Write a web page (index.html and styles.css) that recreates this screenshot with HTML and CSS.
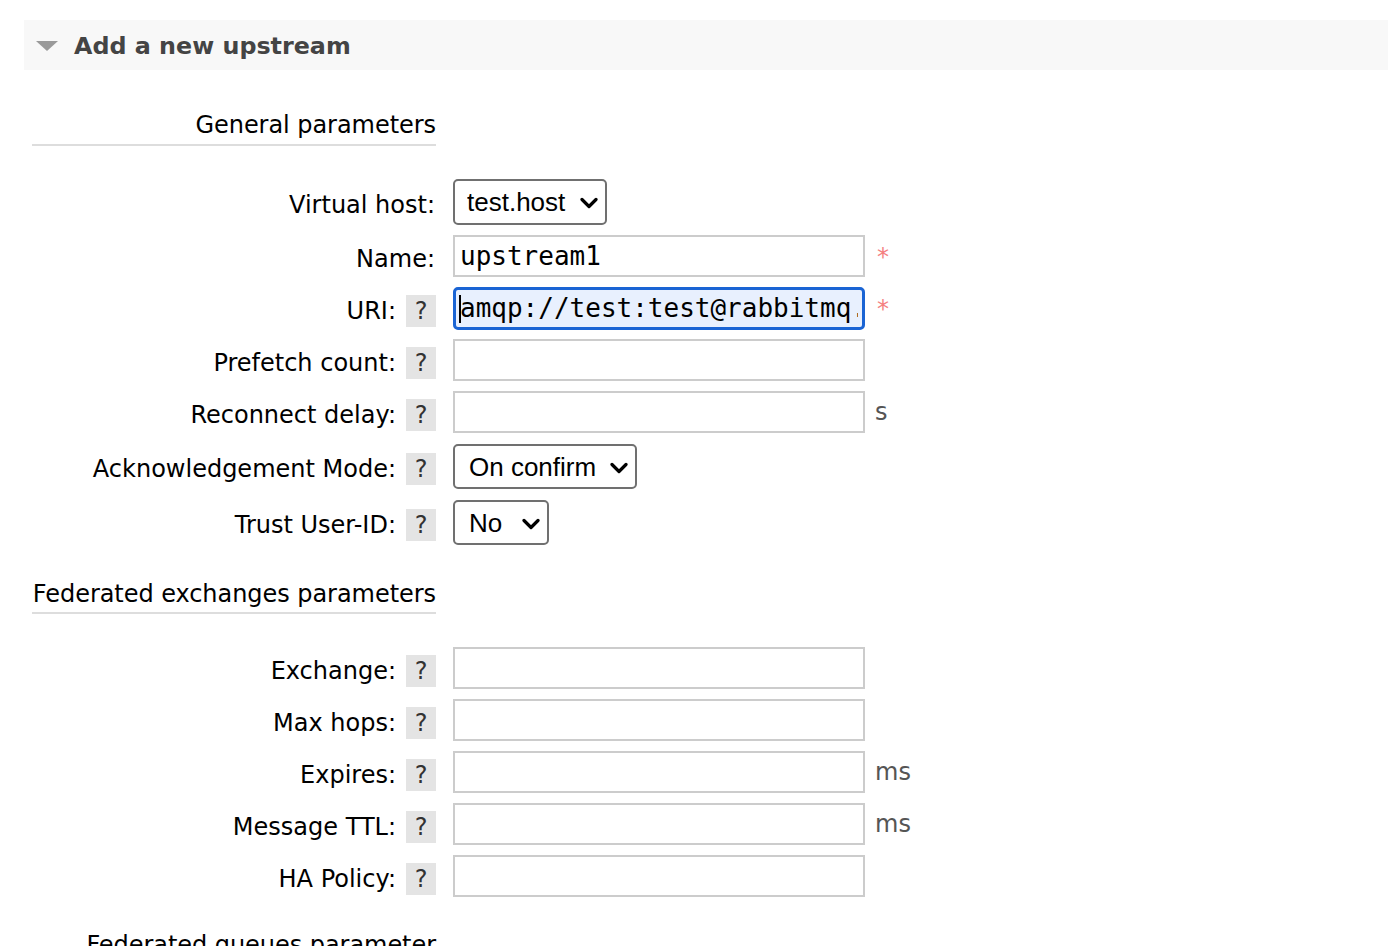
FILE: index.html
```html
<!DOCTYPE html>
<html lang="en">
<head>
<meta charset="utf-8">
<title>Add a new upstream</title>
<link rel="stylesheet" href="styles.css">
</head>
<body>
<div class="section">
  <div class="section-head">
    <span class="arrow"></span>
    <h2 class="section-title">Add a new upstream</h2>
  </div>
  <form class="form">
    <h3 class="group-title">General parameters</h3>
    <div class="rows">
      <div class="row row-select">
        <label class="label">Virtual host:</label>
        <span class="select select-vhost">
          <select><option>test.host</option></select>
          <svg class="chev" viewBox="0 0 18 12" width="18" height="12"><path d="M2 2.5 L9 9.5 L16 2.5" fill="none" stroke="#000" stroke-width="3.2" stroke-linecap="round" stroke-linejoin="round"/></svg>
        </span>
      </div>
      <div class="row">
        <label class="label">Name:</label>
        <input class="field" type="text" value="upstream1">
        <span class="req">*</span>
      </div>
      <div class="row">
        <label class="label">URI:<span class="help">?</span></label>
        <span class="focus-wrap">
          <input class="field field-focus" type="text" value="amqp://test:test@rabbitmq.example.com">
          <span class="caret"></span>
        </span>
        <span class="req">*</span>
      </div>
      <div class="row">
        <label class="label">Prefetch count:<span class="help">?</span></label>
        <input class="field" type="text">
      </div>
      <div class="row">
        <label class="label">Reconnect delay:<span class="help">?</span></label>
        <input class="field" type="text">
        <span class="unit">s</span>
      </div>
      <div class="row row-select2">
        <label class="label">Acknowledgement Mode:<span class="help">?</span></label>
        <span class="select select-ack">
          <select><option>On confirm</option></select>
          <svg class="chev" viewBox="0 0 18 12" width="18" height="12"><path d="M2 2.5 L9 9.5 L16 2.5" fill="none" stroke="#000" stroke-width="3.2" stroke-linecap="round" stroke-linejoin="round"/></svg>
        </span>
      </div>
      <div class="row row-select2">
        <label class="label">Trust User-ID:<span class="help">?</span></label>
        <span class="select select-trust">
          <select><option>No</option></select>
          <svg class="chev" viewBox="0 0 18 12" width="18" height="12"><path d="M2 2.5 L9 9.5 L16 2.5" fill="none" stroke="#000" stroke-width="3.2" stroke-linecap="round" stroke-linejoin="round"/></svg>
        </span>
      </div>
    </div>

    <h3 class="group-title group-next">Federated exchanges parameters</h3>
    <div class="rows">
      <div class="row">
        <label class="label">Exchange:<span class="help">?</span></label>
        <input class="field" type="text">
      </div>
      <div class="row">
        <label class="label">Max hops:<span class="help">?</span></label>
        <input class="field" type="text">
      </div>
      <div class="row">
        <label class="label">Expires:<span class="help">?</span></label>
        <input class="field" type="text">
        <span class="unit">ms</span>
      </div>
      <div class="row">
        <label class="label">Message TTL:<span class="help">?</span></label>
        <input class="field" type="text">
        <span class="unit">ms</span>
      </div>
      <div class="row">
        <label class="label">HA Policy:<span class="help">?</span></label>
        <input class="field" type="text">
      </div>
    </div>

    <h3 class="group-title group-last">Federated queues parameter</h3>
  </form>
</div>
</body>
</html>
```

FILE: styles.css
```css
html, body {
  margin: 0;
  padding: 0;
  background: #fff;
}
body {
  font-family: "DejaVu Sans", Verdana, sans-serif;
  color: #000;
  overflow: hidden;
  height: 946px;
}
.section {
  padding-top: 20px;
  padding-left: 24px;
}
.section-head {
  height: 50px;
  background: #f8f8f8;
  display: flex;
  align-items: center;
}
.arrow {
  width: 0;
  height: 0;
  margin-left: 12px;
  margin-right: 16px;
  border-left: 11px solid transparent;
  border-right: 11px solid transparent;
  border-top: 10px solid #9a9a9a;
  margin-top: 2px;
}
.section-title {
  margin: 0;
  font-size: 23.8px;
  font-weight: bold;
  color: #444;
  padding-top: 1px;
}
.form {
  padding-left: 8px;
  margin: 0;
}
.group-title {
  width: 404px;
  margin: 40px 0 0 0;
  padding-bottom: 4px;
  font-size: 24px;
  font-weight: normal;
  line-height: 30px;
  white-space: nowrap;
  display: flex;
  justify-content: flex-end;
  letter-spacing: -0.05px;
  border-bottom: 2px solid #ddd;
}
.group-next {
  margin-top: 34px;
  padding-bottom: 3px;
}
.group-last {
  margin-top: 33px;
  border-bottom: none;
}
.rows {
  display: flex;
  flex-direction: column;
  gap: 10px;
  margin-top: 33px;
}
.row {
  display: flex;
  align-items: center;
  height: 42px;
}
.row-select {
  height: 46px;
}
.row-select2 {
  height: 45px;
  margin-top: 1px;
}
.label {
  width: 404px;
  flex: none;
  display: flex;
  align-items: center;
  justify-content: flex-end;
  font-size: 24px;
  line-height: 30px;
  padding-right: 1px;
  padding-top: 5px;
  box-sizing: border-box;
}
.help {
  display: inline-flex;
  align-items: center;
  justify-content: center;
  width: 30px;
  height: 32px;
  margin-left: 10px;
  margin-right: -1px;
  background: #e4e4e4;
  color: #333;
  font-size: 24px;
}
.field {
  margin: 0 0 0 17px;
  width: 412px;
  height: 42px;
  box-sizing: border-box;
  border: 2px solid #cccccc;
  border-radius: 0;
  padding: 0 5px;
  font-family: "DejaVu Sans Mono", "Liberation Mono", monospace;
  font-size: 26px;
  color: #000;
  background: #fff;
  outline: none;
}
.focus-wrap {
  position: relative;
  display: flex;
  margin-left: 17px;
}
.focus-wrap .field {
  margin-left: 0;
}
.field-focus {
  height: 43px;
  border: 3px solid #1a64d4;
  border-radius: 5px;
  background: #e8f0fe;
  padding: 0 4px;
}
.caret {
  position: absolute;
  left: 6px;
  top: 8px;
  width: 2px;
  height: 28px;
  background: #000;
}
.req {
  margin-left: 12px;
  margin-top: 2px;
  color: #f47f7f;
  font-size: 24px;
}
.unit {
  margin-left: 10px;
  font-size: 24px;
  color: #555;
}
.select {
  position: relative;
  display: inline-flex;
  margin-left: 17px;
}
.select select {
  appearance: none;
  -webkit-appearance: none;
  box-sizing: border-box;
  height: 46px;
  border: 2px solid #707070;
  border-radius: 5px;
  background: #fff;
  color: #000;
  font-family: "Liberation Sans", Arial, sans-serif;
  font-size: 26px;
  padding: 0 0 0 12px;
  outline: none;
}
.select-vhost select { width: 154px; }
.select-ack select { width: 184px; height: 45px; padding-left: 14px; }
.select-trust select { width: 96px; height: 45px; padding-left: 14px; }
.chev {
  position: absolute;
  right: 9px;
  top: 50%;
  margin-top: -5px;
  pointer-events: none;
}
```
